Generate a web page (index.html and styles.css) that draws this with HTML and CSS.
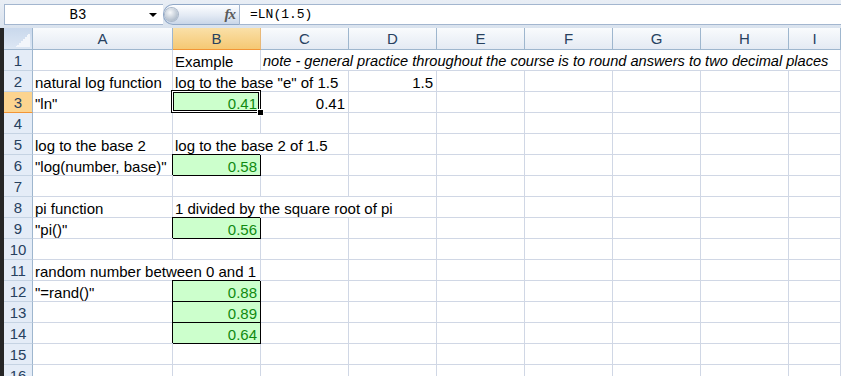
FILE: index.html
```html
<!DOCTYPE html>
<html lang="en">
<head>
    <meta charset="UTF-8">
    <title>Book1 - LN</title>
    <link rel="stylesheet" href="styles.css">
</head>
<body>

    <!-- formula bar -->
    <div class="formula-bar">
        <div class="name-box">
            <span class="name">B3</span>
            <span class="arrow"></span>
        </div>
        <div class="fx-pill">
            <span class="knob"></span>
            <span class="fx">fx</span>
        </div>
        <div class="formula">=LN(1.5)</div>
    </div>

    <!-- sheet -->
    <div class="sheet">
        <div class="corner"></div>
        <div class="col-head">A</div>
        <div class="col-head active">B</div>
        <div class="col-head">C</div>
        <div class="col-head">D</div>
        <div class="col-head">E</div>
        <div class="col-head">F</div>
        <div class="col-head">G</div>
        <div class="col-head">H</div>
        <div class="col-head">I</div>

        <!-- 1 -->
        <div class="row-head">1</div>
        <div class="cell"></div>
        <div class="cell">Example</div>
        <div class="cell span-7 note">note - general practice throughout the course is to round answers to two decimal places</div>

        <!-- 2 -->
        <div class="row-head">2</div>
        <div class="cell">natural log function</div>
        <div class="cell span-2">log to the base "e" of 1.5</div>
        <div class="cell num">1.5</div>
        <div class="cell"></div><div class="cell"></div><div class="cell"></div><div class="cell"></div><div class="cell"></div>

        <!-- 3 -->
        <div class="row-head active">3</div>
        <div class="cell">"ln"</div>
        <div class="cell num result selected">0.41</div>
        <div class="cell num">0.41</div>
        <div class="cell"></div><div class="cell"></div><div class="cell"></div><div class="cell"></div><div class="cell"></div><div class="cell"></div>

        <!-- 4 -->
        <div class="row-head">4</div>
        <div class="cell"></div><div class="cell"></div><div class="cell"></div><div class="cell"></div><div class="cell"></div><div class="cell"></div><div class="cell"></div><div class="cell"></div><div class="cell"></div>

        <!-- 5 -->
        <div class="row-head">5</div>
        <div class="cell">log to the base 2</div>
        <div class="cell span-2">log to the base 2 of 1.5</div>
        <div class="cell"></div><div class="cell"></div><div class="cell"></div><div class="cell"></div><div class="cell"></div><div class="cell"></div>

        <!-- 6 -->
        <div class="row-head">6</div>
        <div class="cell">"log(number, base)"</div>
        <div class="cell num result">0.58</div>
        <div class="cell"></div><div class="cell"></div><div class="cell"></div><div class="cell"></div><div class="cell"></div><div class="cell"></div><div class="cell"></div>

        <!-- 7 -->
        <div class="row-head">7</div>
        <div class="cell"></div><div class="cell"></div><div class="cell"></div><div class="cell"></div><div class="cell"></div><div class="cell"></div><div class="cell"></div><div class="cell"></div><div class="cell"></div>

        <!-- 8 -->
        <div class="row-head">8</div>
        <div class="cell">pi function</div>
        <div class="cell span-3">1 divided by the square root of pi</div>
        <div class="cell"></div><div class="cell"></div><div class="cell"></div><div class="cell"></div><div class="cell"></div>

        <!-- 9 -->
        <div class="row-head">9</div>
        <div class="cell">"pi()"</div>
        <div class="cell num result">0.56</div>
        <div class="cell"></div><div class="cell"></div><div class="cell"></div><div class="cell"></div><div class="cell"></div><div class="cell"></div><div class="cell"></div>

        <!-- 10 -->
        <div class="row-head">10</div>
        <div class="cell"></div><div class="cell"></div><div class="cell"></div><div class="cell"></div><div class="cell"></div><div class="cell"></div><div class="cell"></div><div class="cell"></div><div class="cell"></div>

        <!-- 11 -->
        <div class="row-head">11</div>
        <div class="cell span-2">random number between 0 and 1</div>
        <div class="cell"></div><div class="cell"></div><div class="cell"></div><div class="cell"></div><div class="cell"></div><div class="cell"></div><div class="cell"></div>

        <!-- 12 -->
        <div class="row-head">12</div>
        <div class="cell">"=rand()"</div>
        <div class="cell num result">0.88</div>
        <div class="cell"></div><div class="cell"></div><div class="cell"></div><div class="cell"></div><div class="cell"></div><div class="cell"></div><div class="cell"></div>

        <!-- 13 -->
        <div class="row-head">13</div>
        <div class="cell"></div>
        <div class="cell num result">0.89</div>
        <div class="cell"></div><div class="cell"></div><div class="cell"></div><div class="cell"></div><div class="cell"></div><div class="cell"></div><div class="cell"></div>

        <!-- 14 -->
        <div class="row-head">14</div>
        <div class="cell"></div>
        <div class="cell num result">0.64</div>
        <div class="cell"></div><div class="cell"></div><div class="cell"></div><div class="cell"></div><div class="cell"></div><div class="cell"></div><div class="cell"></div>

        <!-- 15 -->
        <div class="row-head">15</div>
        <div class="cell"></div><div class="cell"></div><div class="cell"></div><div class="cell"></div><div class="cell"></div><div class="cell"></div><div class="cell"></div><div class="cell"></div><div class="cell"></div>

        <!-- 16 -->
        <div class="row-head">16</div>
        <div class="cell"></div><div class="cell"></div><div class="cell"></div><div class="cell"></div><div class="cell"></div><div class="cell"></div><div class="cell"></div><div class="cell"></div><div class="cell"></div>
    </div>

</body>
</html>
```

FILE: styles.css
```css
/* page */
body {
    margin: 0;
    height: 376px;
    overflow: hidden;
    background: #fff;
    font-family: "Liberation Sans", Arial, sans-serif;
}

/* formula bar */
.formula-bar {
    display: flex;
    height: 28px;
    box-sizing: border-box;
    padding: 4px 0 3px 4px;
    background: linear-gradient(#e9eef5, #dae3ee);
}

.name-box {
    display: flex;
    align-items: center;
    width: 159px;
    box-sizing: border-box;
    background: #fff;
    border: 1px solid #a3b6cf;
    border-right: none;
}

.name-box .name {
    flex: 1;
    text-align: center;
    padding-left: 6px;
    font-family: "Liberation Mono", monospace;
    font-size: 14px;
    color: #000;
}

.name-box .arrow {
    width: 0;
    height: 0;
    margin: 1px 6px 0 4px;
    border-left: 4px solid transparent;
    border-right: 4px solid transparent;
    border-top: 4px solid #000;
}

.fx-pill {
    display: flex;
    align-items: center;
    justify-content: space-between;
    width: 76px;
    box-sizing: border-box;
    padding: 0 4px 0 1px;
    border: 1px solid #8fa7c7;
    border-right: none;
    border-radius: 10px 0 0 10px;
    background: linear-gradient(#fdfeff, #e3eaf4 55%, #c9d6e8);
}

.knob {
    width: 13px;
    height: 13px;
    border-radius: 50%;
    background: radial-gradient(circle at 40% 35%, #f7f9fb, #b3bfcd 70%, #8d9aab);
    box-shadow: 0 0 0 1px #aab8ca;
}

.fx {
    font-family: "Liberation Serif", serif;
    font-style: italic;
    font-weight: bold;
    font-size: 15px;
    color: #5a5a5a;
    letter-spacing: -1px;
}

.formula {
    flex: 1;
    box-sizing: border-box;
    padding-left: 10px;
    background: #fff;
    border: 1px solid #a3b6cf;
    border-right: none;
    font-family: "Liberation Mono", monospace;
    font-size: 13px;
    line-height: 19px;
    color: #000;
}

/* sheet grid */
.sheet {
    display: grid;
    grid-template-columns: 29px 140px repeat(7, 88px) 1fr;
    grid-template-rows: 22px;
    grid-auto-rows: 21px;
    border-left: 4px solid #262626;
    font-size: 15px;
    color: #000;
}

.corner {
    box-sizing: border-box;
    border-right: 1px solid #9eb6ce;
    border-bottom: 1px solid #9eb6ce;
    background:
        linear-gradient(to bottom right, transparent 50%, #f3f6fb 50%) right 2px bottom 2px / 14px 14px no-repeat,
        linear-gradient(#c9d8ec, #dde7f4);
}

.col-head {
    box-sizing: border-box;
    padding-top: 1px;
    border-right: 1px solid #9eb6ce;
    border-bottom: 1px solid #9eb6ce;
    background: linear-gradient(#f9fbfd, #e4eaf3);
    color: #27415f;
    text-align: center;
    line-height: 20px;
}

.col-head.active {
    background: linear-gradient(#fae0a8, #f5c873);
    border-bottom-color: #f29536;
    border-right-color: #e8b878;
}

.row-head {
    box-sizing: border-box;
    padding-top: 1px;
    border-right: 1px solid #9eb6ce;
    border-bottom: 1px solid #c5d3e3;
    background: #e4ecf7;
    color: #27415f;
    text-align: center;
    line-height: 19px;
}

.row-head.active {
    background: #fcd48f;
    border-bottom-color: #f29536;
}

/* cells */
.cell {
    box-sizing: border-box;
    padding: 2px 3px 0 2px;
    border-right: 1px solid #d0d7e5;
    border-bottom: 1px solid #d0d7e5;
    line-height: 19px;
    white-space: nowrap;
}

.span-2 { grid-column: span 2; }
.span-3 { grid-column: span 3; }
.span-7 { grid-column: span 7; overflow: hidden; }

.note {
    font-style: italic;
    font-size: 14.6px;
}

.num {
    text-align: right;
}

.result {
    background: #ccffcc;
    color: #108a10;
    border-right-color: #000;
    border-bottom-color: #000;
    box-shadow: -1px -1px 0 #000;
}

/* active cell outline and fill handle */
.selected {
    position: relative;
}

.selected::before {
    content: "";
    position: absolute;
    top: -2px;
    left: -2px;
    right: -1px;
    bottom: -1px;
    border: 1px solid #000;
    box-shadow: inset 0 0 0 1px #fff, inset 0 0 0 2px #000;
}

.selected::after {
    content: "";
    position: absolute;
    right: -4px;
    bottom: -4px;
    width: 5px;
    height: 5px;
    background: #000;
    border: 1px solid #fff;
}
```
